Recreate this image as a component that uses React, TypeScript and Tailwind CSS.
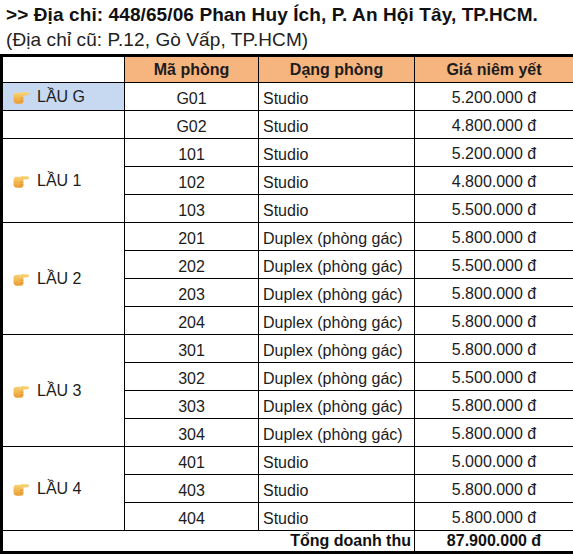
import React from "react";

type Room = { code: string; kind: string; price: string };
type Floor = { name: string; rooms: Room[]; highlight?: boolean };

const floors: Floor[] = [
  { name: "LẦU G", highlight: true, rooms: [{ code: "G01", kind: "Studio", price: "5.200.000 đ" }] },
  { name: "", rooms: [{ code: "G02", kind: "Studio", price: "4.800.000 đ" }] },
  {
    name: "LẦU 1",
    rooms: [
      { code: "101", kind: "Studio", price: "5.200.000 đ" },
      { code: "102", kind: "Studio", price: "4.800.000 đ" },
      { code: "103", kind: "Studio", price: "5.500.000 đ" },
    ],
  },
  {
    name: "LẦU 2",
    rooms: [
      { code: "201", kind: "Duplex (phòng gác)", price: "5.800.000 đ" },
      { code: "202", kind: "Duplex (phòng gác)", price: "5.500.000 đ" },
      { code: "203", kind: "Duplex (phòng gác)", price: "5.800.000 đ" },
      { code: "204", kind: "Duplex (phòng gác)", price: "5.800.000 đ" },
    ],
  },
  {
    name: "LẦU 3",
    rooms: [
      { code: "301", kind: "Duplex (phòng gác)", price: "5.800.000 đ" },
      { code: "302", kind: "Duplex (phòng gác)", price: "5.500.000 đ" },
      { code: "303", kind: "Duplex (phòng gác)", price: "5.800.000 đ" },
      { code: "304", kind: "Duplex (phòng gác)", price: "5.800.000 đ" },
    ],
  },
  {
    name: "LẦU 4",
    rooms: [
      { code: "401", kind: "Studio", price: "5.000.000 đ" },
      { code: "403", kind: "Studio", price: "5.800.000 đ" },
      { code: "404", kind: "Studio", price: "5.800.000 đ" },
    ],
  },
];

// little pointing hand, drawn since there is no emoji font
function Hand() {
  return (
    <svg width="17" height="16" viewBox="0 0 17 15" className="shrink-0">
      <defs>
        <linearGradient id="hg" x1="0" y1="0" x2="0" y2="1">
          <stop offset="0" stopColor="#f9d778" />
          <stop offset="1" stopColor="#eb9b30" />
        </linearGradient>
      </defs>
      <path
        d="M0.5 6.5 Q0.5 3.2 4 3.2 L7.5 3.2 Q8.8 2.1 10.2 2.8 L15 2.8 Q17 4 15 5.8 L10.4 6.1 L10.4 11.8 Q10.4 14.2 7.6 14.2 L4 14.2 Q0.5 14.2 0.5 10.6 Z"
        fill="url(#hg)"
      />
      <path d="M10.4 8.7 L7 8.7 M10.4 11.4 L7 11.4" stroke="#dc8d2b" strokeWidth="0.7" />
    </svg>
  );
}

const cell = "border border-black text-[16px] leading-[20px] text-[#1c1c1c]";

export default function App() {
  return (
    <div className="w-[573px] h-[556px] bg-white font-['Liberation_Sans',Arial,sans-serif] overflow-hidden">
      <div className="px-[6px] pt-[2px] leading-[25px]">
        <div className="text-[19px] font-bold text-[#111] tracking-[0.1px]">
          &gt;&gt; Địa chỉ: 448/65/06 Phan Huy Ích, P. An Hội Tây, TP.HCM.
        </div>
        <div className="text-[19px] text-[#222] tracking-[0.1px]">(Địa chỉ cũ: P.12, Gò Vấp, TP.HCM)</div>
      </div>

      <table className="mt-[2px] w-[573px] border-collapse border-[3px] border-black table-fixed">
        <colgroup>
          <col className="w-[123px]" />
          <col className="w-[134px]" />
          <col className="w-[156px]" />
          <col className="w-[160px]" />
        </colgroup>
        <thead>
          <tr className="h-[27px]">
            <th className={cell}></th>
            <th className={`${cell} bg-[#f6b47f] font-bold text-center`}>Mã phòng</th>
            <th className={`${cell} bg-[#f6b47f] font-bold text-center`}>Dạng phòng</th>
            <th className={`${cell} bg-[#f6b47f] font-bold text-center`}>Giá niêm yết</th>
          </tr>
        </thead>
        <tbody>
          {floors.map((floor, fi) =>
            floor.rooms.map((room, ri) => (
              <tr key={`${fi}-${ri}`} className="h-[28px]">
                {ri === 0 && (
                  <td
                    rowSpan={floor.rooms.length}
                    className={`${cell} pl-[10px] ${floor.highlight ? "bg-[#c6d9f0]" : ""}`}
                  >
                    {floor.name && (
                      <div className="flex items-center gap-[7px]">
                        <Hand />
                        <span>{floor.name}</span>
                      </div>
                    )}
                  </td>
                )}
                <td className={`${cell} text-center pt-[4px]`}>{room.code}</td>
                <td className={`${cell} pl-[4px] pt-[4px]`}>{room.kind}</td>
                <td className={`${cell} text-center pt-[2px]`}>{room.price}</td>
              </tr>
            ))
          )}
          <tr className="h-[22px]">
            <td colSpan={3} className={`${cell} text-right font-bold pr-[3px] text-[#111]`}>
              Tổng doanh thu
            </td>
            <td className={`${cell} text-center font-bold text-[#111]`}>87.900.000 đ</td>
          </tr>
        </tbody>
      </table>
    </div>
  );
}
